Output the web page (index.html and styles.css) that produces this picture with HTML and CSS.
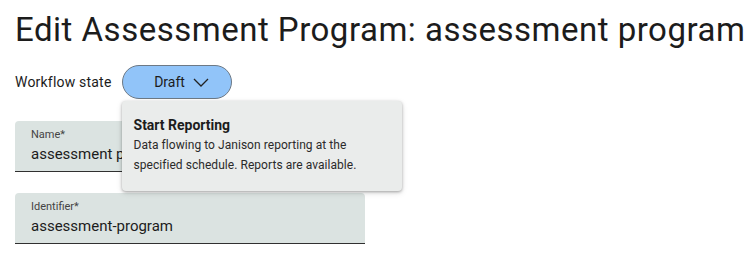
FILE: index.html
```html
<!DOCTYPE html>
<html lang="en">
<head>
    <meta charset="UTF-8">
    <meta name="viewport" content="width=device-width, initial-scale=1.0">
    <title>Edit Assessment Program</title>
    <link rel="stylesheet" href="styles.css">
</head>
<body>
    <div class="page">
        <h1 class="title">Edit Assessment Program: assessment program</h1>

        <div class="workflow">
            <span class="workflow-label">Workflow state</span>
            <div class="state-menu">
                <button class="state-btn">
                    Draft
                    <svg class="chevron" width="16" height="9" viewBox="0 0 16 9">
                        <path d="M1 1l7 7 7-7" fill="none" stroke="#222" stroke-width="1.3"/>
                    </svg>
                </button>
                <div class="state-popup">
                    <div class="popup-title">Start Reporting</div>
                    <div class="popup-text">Data flowing to Janison reporting at the specified schedule. Reports are available.</div>
                </div>
            </div>
        </div>

        <div class="fields">
            <div class="field">
                <label class="field-label">Name*</label>
                <div class="field-value">assessment program</div>
            </div>
            <div class="field">
                <label class="field-label">Identifier*</label>
                <div class="field-value">assessment-program</div>
            </div>
        </div>
    </div>
</body>
</html>
```

FILE: styles.css
```css
body{
    margin: 0;
    font-family: Roboto, "Liberation Sans", sans-serif;
    color: #1c1c1c;
    background: #fff;
}
.page{
    padding: 10px 15px;
}
.title{
    margin: 0;
    font-size: 33px;
    letter-spacing: 0.5px;
    line-height: 40px;
    font-weight: 400;
    white-space: nowrap;
}
.workflow{
    display: flex;
    align-items: center;
    gap: 10px;
    margin-top: 15px;
}
.workflow-label{
    font-size: 14px;
    letter-spacing: 0.2px;
}
.state-menu{
    position: relative;
}
.state-btn{
    display: flex;
    align-items: center;
    justify-content: center;
    gap: 8px;
    width: 110px;
    height: 34px;
    padding: 0 0 0 10px;
    border: 1px solid #6d7985;
    border-radius: 17px;
    background-color: #91c4f9;
    font-family: inherit;
    font-size: 14px;
    color: #1c1c1c;
}
.chevron{
    margin-top: 1px;
}
.state-popup{
    position: absolute;
    left: 0;
    top: 36px;
    z-index: 2;
    width: 256px;
    height: 66px;
    padding: 12px;
    background-color: #eaeceb;
    border-radius: 4px;
    box-shadow: 0 1px 3px rgba(0,0,0,0.3), 0 2px 6px rgba(0,0,0,0.12);
}
.popup-title{
    font-size: 14px;
    font-weight: 700;
    line-height: 20px;
    margin-top: 2px;
}
.popup-text{
    font-size: 12px;
    letter-spacing: 0.05px;
    line-height: 20px;
    color: #2a2a2a;
}
.fields{
    display: flex;
    flex-direction: column;
    gap: 21px;
    margin-top: 22px;
    width: 350px;
}
.field{
    display: flex;
    flex-direction: column;
    gap: 3px;
    padding: 7px 16px;
    background-color: #dbe3e1;
    border-radius: 4px 4px 0 0;
    border-bottom: 1px solid #303030;
}
.field-label{
    font-size: 11px;
    line-height: 13px;
    color: #444;
}
.field-value{
    font-size: 15px;
    line-height: 20px;
    white-space: nowrap;
    overflow: hidden;
}
```
